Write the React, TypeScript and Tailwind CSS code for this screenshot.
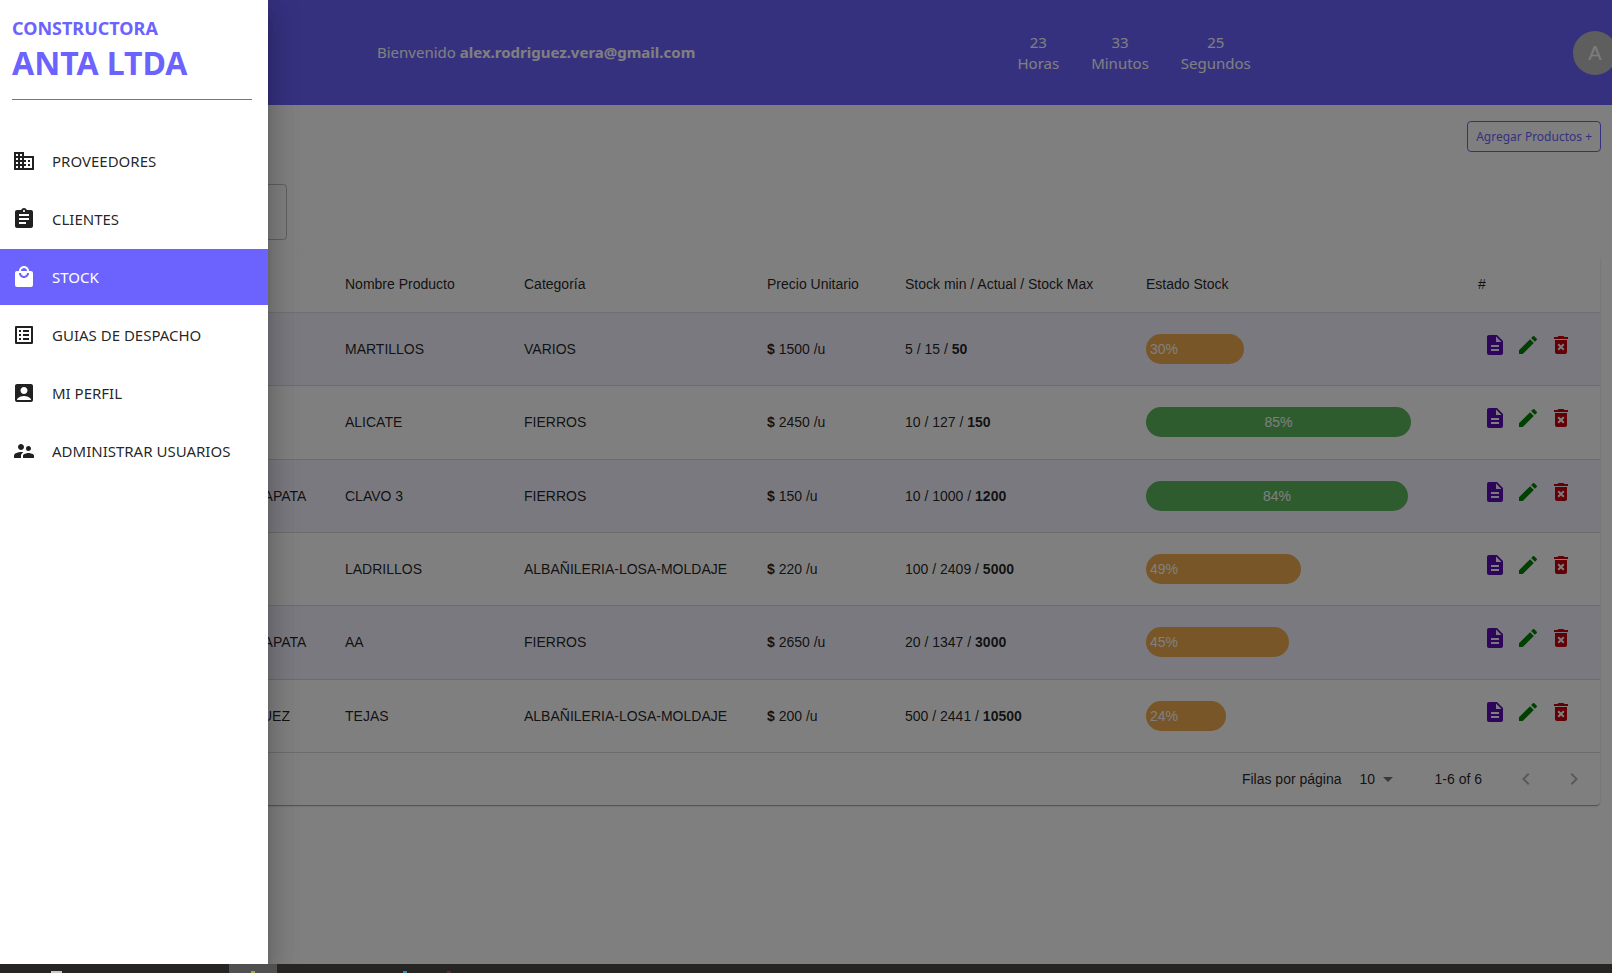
import clsx from "clsx"
import type { IconType } from "react-icons"
import {
  MdAccountBox,
  MdArrowDropDown,
  MdAssignment,
  MdChevronLeft,
  MdChevronRight,
  MdDeleteForever,
  MdDescription,
  MdDomain,
  MdEdit,
  MdListAlt,
  MdLocalMall,
  MdSupervisorAccount,
} from "react-icons/md"

type Product = {
  supplier: string
  name: string
  category: string
  price: number
  min: number
  current: number
  max: number
  percent: number
}

const PRODUCTS: Product[] = [
  { supplier: "", name: "MARTILLOS", category: "VARIOS", price: 1500, min: 5, current: 15, max: 50, percent: 30 },
  { supplier: "", name: "ALICATE", category: "FIERROS", price: 2450, min: 10, current: 127, max: 150, percent: 85 },
  { supplier: "DIEGO ZAPATA", name: "CLAVO 3", category: "FIERROS", price: 150, min: 10, current: 1000, max: 1200, percent: 84 },
  { supplier: "", name: "LADRILLOS", category: "ALBAÑILERIA-LOSA-MOLDAJE", price: 220, min: 100, current: 2409, max: 5000, percent: 49 },
  { supplier: "DIEGO ZAPATA", name: "AA", category: "FIERROS", price: 2650, min: 20, current: 1347, max: 3000, percent: 45 },
  { supplier: "RODRIGUEZ", name: "TEJAS", category: "ALBAÑILERIA-LOSA-MOLDAJE", price: 200, min: 500, current: 2441, max: 10500, percent: 24 },
]

const MENU: { label: string; icon: IconType; active?: boolean }[] = [
  { label: "PROVEEDORES", icon: MdDomain },
  { label: "CLIENTES", icon: MdAssignment },
  { label: "STOCK", icon: MdLocalMall, active: true },
  { label: "GUIAS DE DESPACHO", icon: MdListAlt },
  { label: "MI PERFIL", icon: MdAccountBox },
  { label: "ADMINISTRAR USUARIOS", icon: MdSupervisorAccount },
]

const CLOCK = [
  { value: 23, unit: "Horas" },
  { value: 33, unit: "Minutos" },
  { value: 25, unit: "Segundos" },
]

function TopBar() {
  return (
    <header className="-mr-[5px] flex h-[105px] shrink-0 items-center justify-between bg-[#6c63ff] pl-[377px] text-[15px] leading-[21px] text-white">
      <p>
        Bienvenido <strong>alex.rodriguez.vera@gmail.com</strong>
      </p>
      <div className="flex gap-8 text-center">
        {CLOCK.map(({ value, unit }) => (
          <div key={unit}>
            <div>{value}</div>
            <div>{unit}</div>
          </div>
        ))}
      </div>
      <div className="flex size-11 items-center justify-center rounded-full bg-[#bdbdbd] font-['Liberation_Sans',sans-serif] text-xl text-[#fafafa]">
        A
      </div>
    </header>
  )
}

function StockBar({ percent }: { percent: number }) {
  const high = percent > 75
  return (
    <div
      className={clsx(
        "box-content flex h-[30px] items-center rounded-full text-white",
        high ? "justify-center bg-[#5cb85c] px-[5px]" : "bg-[#f0ad4e] px-1",
      )}
      style={{ width: `${percent}%` }}
    >
      {percent}%
    </div>
  )
}

function ProductRow({ product }: { product: Product }) {
  return (
    <tr className="odd:bg-[#f4f2ff] [&>td]:border-b [&>td]:border-[#d8d8dc] [&>td]:px-4">
      <td />
      <td className="whitespace-nowrap">{product.supplier}</td>
      <td>{product.name}</td>
      <td>{product.category}</td>
      <td>
        <b>$</b> {product.price} /u
      </td>
      <td>
        {product.min} / {product.current} / <b>{product.max}</b>
      </td>
      <td>
        <StockBar percent={product.percent} />
      </td>
      <td>
        <div className="flex gap-[9px] pb-2 pl-[5px] text-2xl">
          <button aria-label="Detalle" className="text-[#5a0cb8]" type="button">
            <MdDescription />
          </button>
          <button aria-label="Editar" className="text-[#008000]" type="button">
            <MdEdit />
          </button>
          <button aria-label="Eliminar" className="text-[#c4000c]" type="button">
            <MdDeleteForever />
          </button>
        </div>
      </td>
    </tr>
  )
}

function Pagination() {
  return (
    <div className="flex h-[52px] items-center justify-end pr-[14px]">
      <label htmlFor="rows">Filas por página</label>
      <div className="relative ml-[18px] flex items-center">
        <select className="w-10 appearance-none bg-transparent" defaultValue="10" id="rows">
          <option>10</option>
          <option>25</option>
        </select>
        <MdArrowDropDown className="pointer-events-none absolute left-4 text-2xl text-black/55" />
      </div>
      <span className="ml-[35px]">1-6 of 6</span>
      <div className="ml-8 flex gap-6 text-2xl text-black/30">
        <button aria-label="Anterior" disabled type="button">
          <MdChevronLeft />
        </button>
        <button aria-label="Siguiente" disabled type="button">
          <MdChevronRight />
        </button>
      </div>
    </div>
  )
}

function StockPage() {
  return (
    <main className="flex flex-col px-3 pt-4">
      <button
        className="mr-[-1px] h-[31px] self-end rounded border border-[#6c63ff] px-2 text-xs text-[#6c63ff]"
        type="button"
      >
        Agregar Productos +
      </button>
      <input
        aria-label="Buscar"
        className="mt-8 h-14 w-[275px] rounded border border-black/25 px-4"
        type="text"
      />
      <section className="mt-[15px] rounded bg-white font-['Liberation_Sans',sans-serif] text-sm text-black/87 shadow-[0_2px_1px_-1px_rgba(0,0,0,0.2),0_1px_1px_rgba(0,0,0,0.14),0_1px_3px_rgba(0,0,0,0.12)]">
        <table className="h-[498px] w-full table-fixed border-separate border-spacing-0 text-left">
          <colgroup>
            <col className="w-[178px]" />
            <col className="w-[139px]" />
            <col className="w-[179px]" />
            <col className="w-[243px]" />
            <col className="w-[138px]" />
            <col className="w-[241px]" />
            <col className="w-[332px]" />
            <col className="w-[138px]" />
          </colgroup>
          <thead>
            <tr className="h-[58px] [&>th]:border-b [&>th]:border-[#e0e0e0] [&>th]:px-4 [&>th]:font-normal">
              <th>N°</th>
              <th>Nombre</th>
              <th>Nombre Producto</th>
              <th>Categoría</th>
              <th>Precio Unitario</th>
              <th>Stock min / Actual / Stock Max</th>
              <th>Estado Stock</th>
              <th>#</th>
            </tr>
          </thead>
          <tbody>
            {PRODUCTS.map((product) => (
              <ProductRow key={product.name} product={product} />
            ))}
          </tbody>
        </table>
        <Pagination />
      </section>
    </main>
  )
}

function Drawer() {
  return (
    <aside className="absolute inset-y-0 left-0 w-[268px] bg-white text-black/87 shadow-[0_8px_10px_-5px_rgba(0,0,0,0.2),0_16px_24px_2px_rgba(0,0,0,0.14),0_6px_30px_5px_rgba(0,0,0,0.12)]">
      <div className="mr-4 ml-3 border-b border-[#6c63ff] pt-4 pb-4 font-bold text-[#6c63ff]">
        <p className="text-lg leading-6">CONSTRUCTORA</p>
        <h1 className="mt-[3px] text-[32px] leading-10">ANTA LTDA</h1>
      </div>
      <nav className="mt-[33px] flex flex-col gap-0.5">
        {MENU.map(({ label, icon: Icon, active }) => (
          <a
            className={clsx("flex h-14 items-center gap-4 px-3 text-[15px]", active && "bg-[#6c63ff] text-white")}
            href="#"
            key={label}
          >
            <Icon className="size-6" />
            {label}
          </a>
        ))}
      </nav>
    </aside>
  )
}

function Taskbar() {
  return (
    <div className="flex h-[9px] shrink-0 items-end bg-[#262524]">
      <span className="ml-[51px] h-0.5 w-[11px] bg-[#c8c8c8]" />
      <span className="ml-[167px] flex h-full w-12 items-end justify-center bg-[#505050]">
        <span className="h-0.5 w-1 bg-[#a3a83a]" />
      </span>
      <span className="ml-[126px] h-0.5 w-1 bg-[#2a8fc4]" />
      <span className="ml-10 h-0.5 w-1 bg-[#5c2a32]" />
    </div>
  )
}

export default function App() {
  return (
    <div className="flex h-screen flex-col overflow-hidden font-['Noto_Sans',sans-serif]">
      <div className="relative flex-1 overflow-hidden bg-white">
        <TopBar />
        <StockPage />
        <div className="absolute inset-0 bg-black/50" />
        <Drawer />
      </div>
      <Taskbar />
    </div>
  )
}
